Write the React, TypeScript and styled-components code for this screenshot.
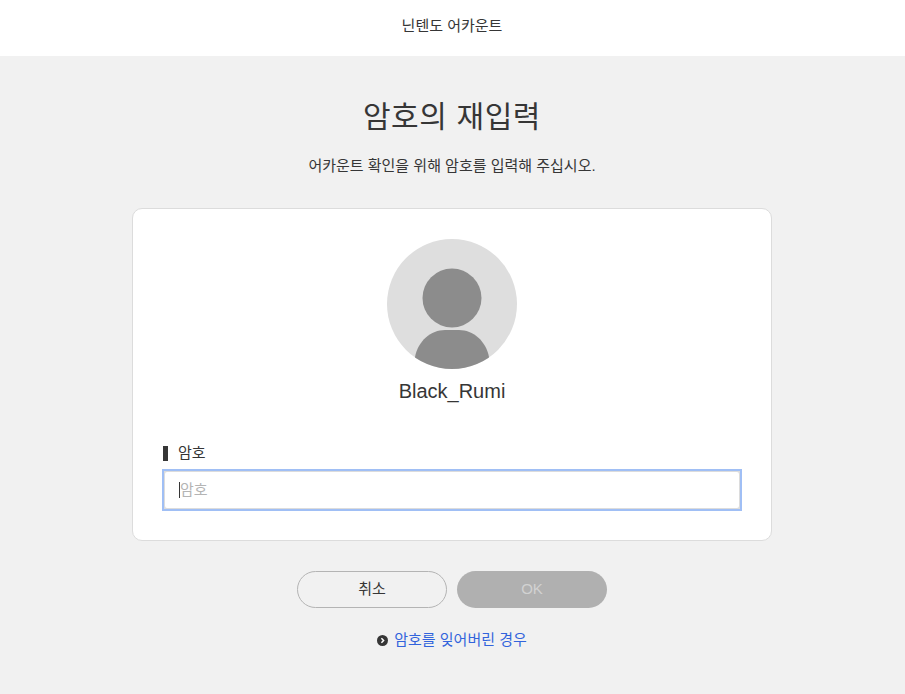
import * as React from 'react';
import styled, { createGlobalStyle } from 'styled-components';

const fontStack = `"Liberation Sans", "Noto Sans CJK KR", sans-serif`;

const GlobalStyle = createGlobalStyle`
  html, body {
    margin: 0;
    padding: 0;
    height: 100%;
    background: #f1f1f1;
  }
  body {
    font-family: ${fontStack};
    color: #363636;
  }
  * {
    box-sizing: border-box;
  }
`;

const Page = styled.div`
  display: flex;
  flex-direction: column;
  align-items: center;
  min-height: 694px;
  padding-right: 1px;
  overflow: hidden;
`;

const Header = styled.header`
  width: 905px;
  height: 56px;
  margin-right: -1px;
  padding: 0 1px 4px 0;
  background: #fff;
  display: flex;
  align-items: center;
  justify-content: center;
  font-size: 15px;
  line-height: 20px;
`;

const Title = styled.h1`
  margin: 41px 0 0;
  height: 40px;
  font-size: 30px;
  line-height: 40px;
  font-weight: 400;
  letter-spacing: 0.6px;
  text-align: center;
`;

const Lead = styled.p`
  margin: 19px 0 0;
  height: 20px;
  font-size: 15px;
  line-height: 20px;
  text-align: center;
`;

const Card = styled.section`
  width: 640px;
  height: 333px;
  margin-top: 32px;
  padding: 30px 30px 0;
  background: #fff;
  border: 1px solid #dcdcdc;
  border-radius: 10px;
  display: flex;
  flex-direction: column;
  align-items: center;
`;

const Avatar = styled.svg`
  display: block;
  width: 130px;
  height: 130px;
`;

const UserName = styled.div`
  margin-top: 9px;
  font-size: 20px;
  line-height: 26px;
  text-align: center;
`;

const Field = styled.div`
  align-self: stretch;
  margin-top: 39px;
`;

const Label = styled.label`
  display: flex;
  align-items: center;
  height: 20px;
  font-size: 15px;
  line-height: 20px;

  &::before {
    content: '';
    width: 5px;
    height: 15px;
    margin-right: 10px;
    background: #363636;
  }
`;

const InputWrap = styled.div`
  position: relative;
  margin-top: 7px;
  height: 40px;
  outline: 2px solid #a0bff5;
  outline-offset: -1px;
  background: #fff;
`;

const PasswordInput = styled.input`
  display: block;
  width: 100%;
  height: 100%;
  padding: 0 15px 2px;
  border: 2px solid #dcdcdc;
  border-radius: 4px;
  outline: none;
  background: #fff;
  font-family: ${fontStack};
  font-size: 15px;
  color: #363636;

  &::placeholder {
    color: #b4b4b4;
    opacity: 1;
  }
`;

const Caret = styled.span`
  position: absolute;
  left: 16px;
  top: 12px;
  width: 1px;
  height: 16px;
  background: #363636;
`;

const Actions = styled.div`
  display: flex;
  gap: 10px;
  margin-top: 30px;
`;

const PillButton = styled.button<{ $primary?: boolean }>`
  width: 150px;
  height: 37px;
  border-radius: 19px;
  border: ${p => (p.$primary ? 'none' : '1px solid #b4b4b4')};
  background: ${p => (p.$primary ? '#b0b0b0' : 'transparent')};
  color: ${p => (p.$primary ? '#d2d2d2' : '#363636')};
  font-family: ${fontStack};
  font-size: 15px;
  line-height: 20px;
  padding: 0 0 1px;
`;

const HelpLink = styled.a`
  display: flex;
  align-items: center;
  gap: 6px;
  margin-top: 22px;
  font-size: 15px;
  line-height: 20px;
  color: #3264dc;
  text-decoration: none;
`;

const ChevronBadge = styled.svg`
  display: block;
  width: 11px;
  height: 11px;
`;

const App: React.FC = () => {
  return (
    <Page>
      <GlobalStyle />
      <Header>닌텐도 어카운트</Header>
      <Title>암호의 재입력</Title>
      <Lead>어카운트 확인을 위해 암호를 입력해 주십시오.</Lead>
      <Card>
        <Avatar viewBox="0 0 130 130">
          <defs>
            <clipPath id="avatar-clip">
              <circle cx="65" cy="65" r="65" />
            </clipPath>
          </defs>
          <circle cx="65" cy="65" r="65" fill="#dedede" />
          <g clipPath="url(#avatar-clip)" fill="#8c8c8c">
            <circle cx="65" cy="59" r="29.5" />
            <path d="M28 118 C31 102 44 91 58 91 L72 91 C86 91 99 102 102 118 L102 130 L28 130 Z" />
          </g>
        </Avatar>
        <UserName>Black_Rumi</UserName>
        <Field>
          <Label htmlFor="password">암호</Label>
          <InputWrap>
            <PasswordInput id="password" type="password" placeholder="암호" />
            <Caret />
          </InputWrap>
        </Field>
      </Card>
      <Actions>
        <PillButton>취소</PillButton>
        <PillButton $primary>OK</PillButton>
      </Actions>
      <HelpLink href="#">
        <ChevronBadge viewBox="0 0 11 11">
          <circle cx="5.5" cy="5.5" r="5.5" fill="#363636" />
          <path d="M4.4 3.2 L6.6 5.5 L4.4 7.8" fill="none" stroke="#fff" strokeWidth="1.5" />
        </ChevronBadge>
        암호를 잊어버린 경우
      </HelpLink>
    </Page>
  );
};

export default App;
